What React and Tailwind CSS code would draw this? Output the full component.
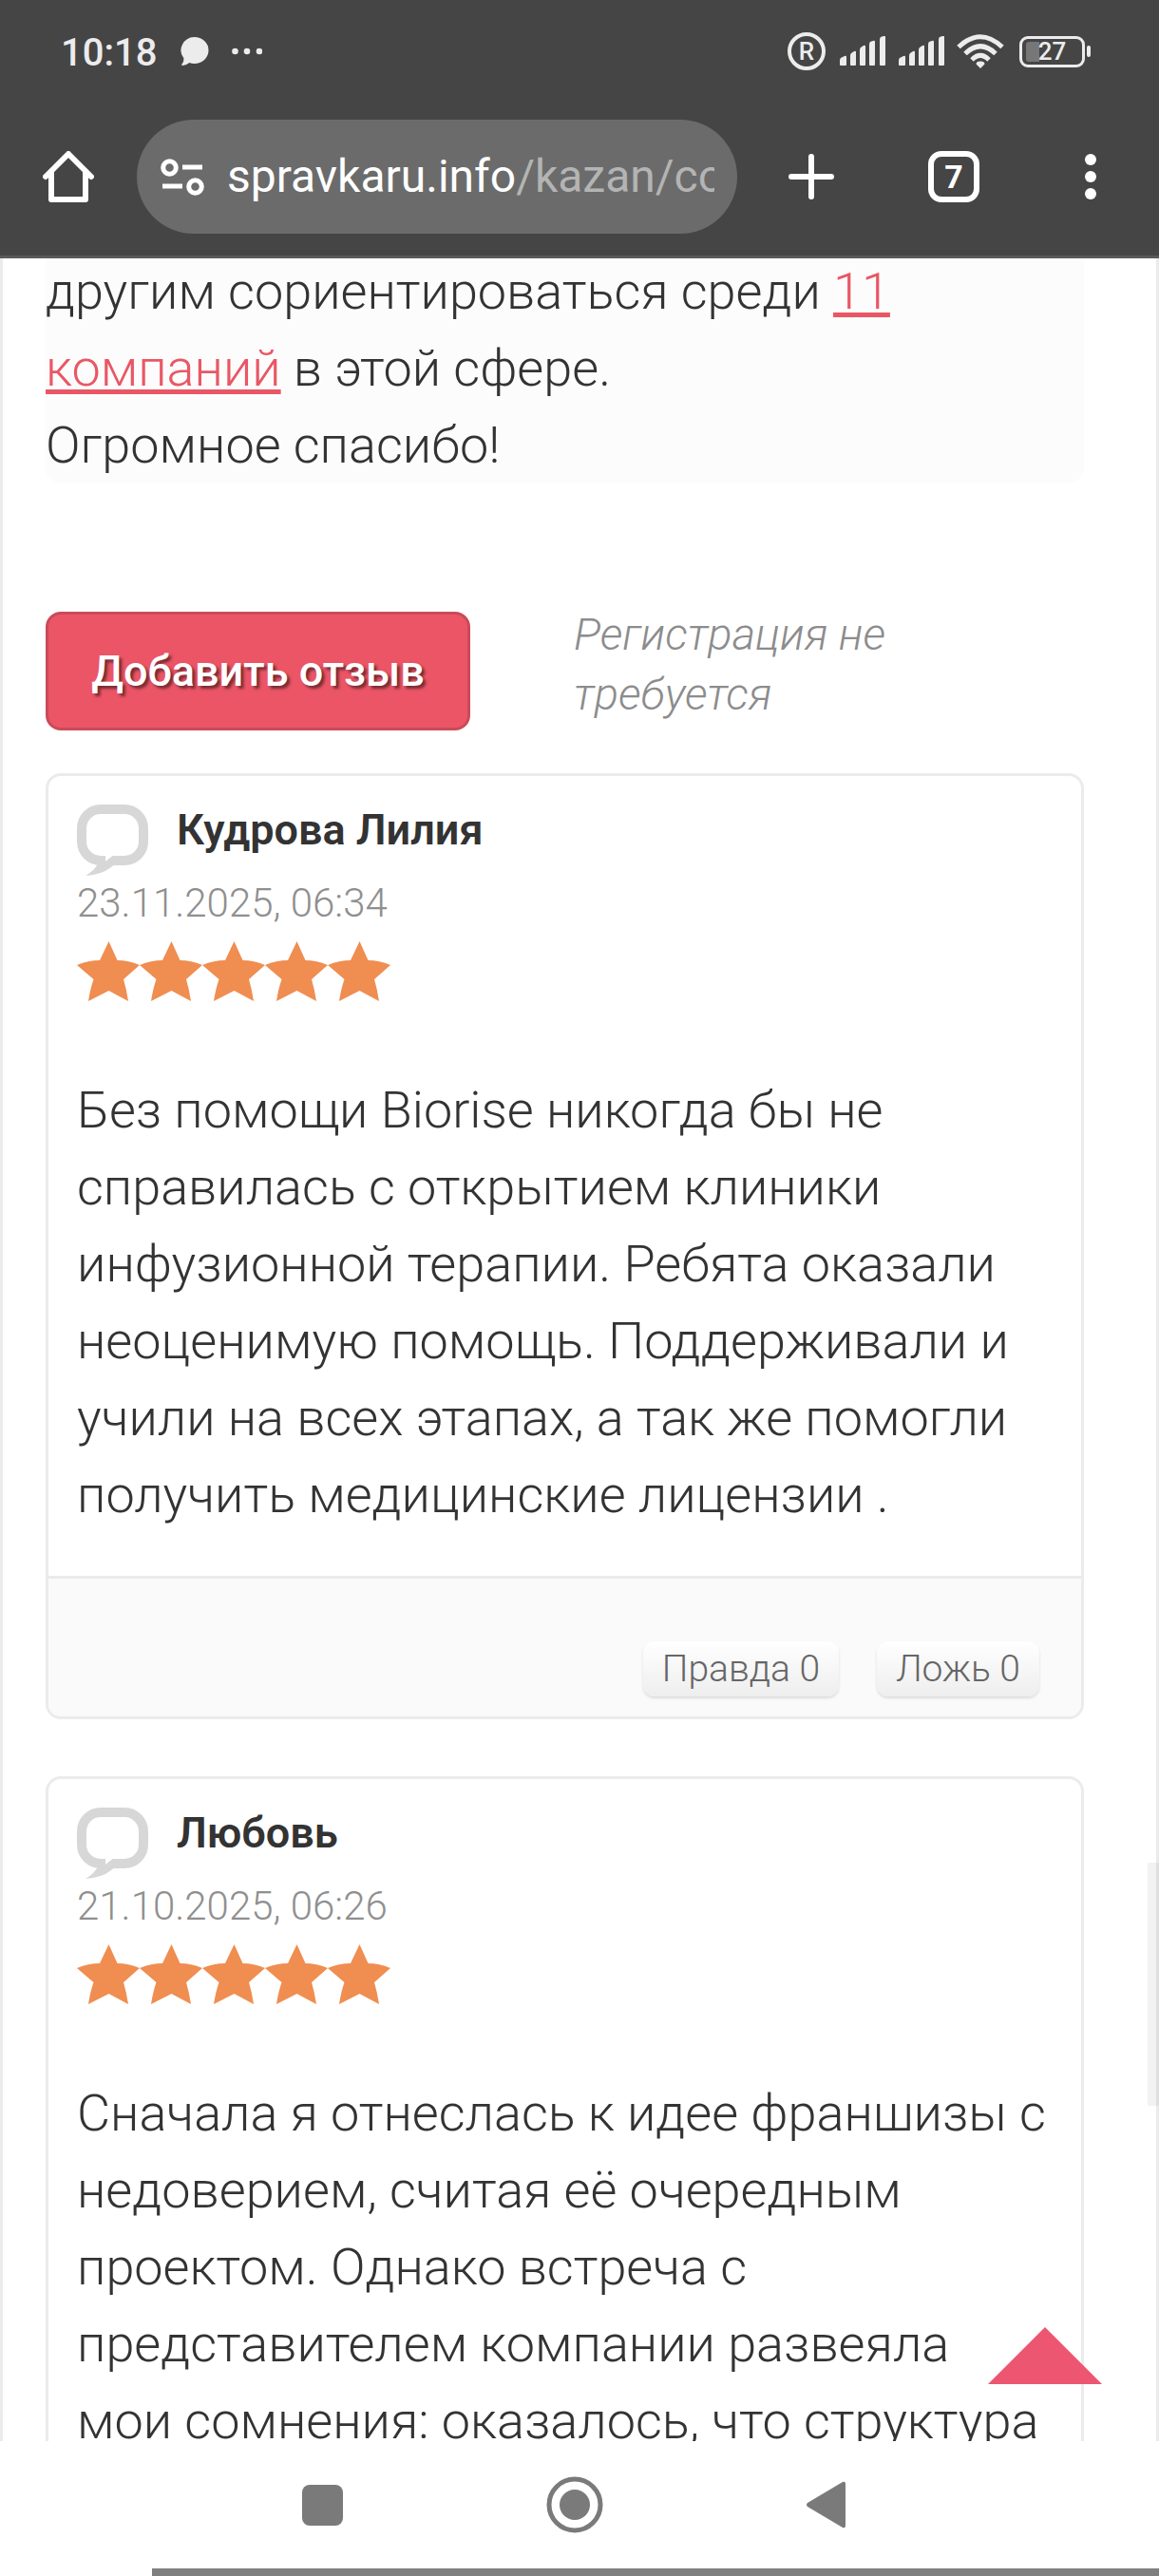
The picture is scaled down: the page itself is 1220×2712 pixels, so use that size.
import React from 'react';

const reviews = [
  {
    id: 1,
    author: 'Кудрова Лилия',
    date: '23.11.2025, 06:34',
    rating: 5,
    text: 'Без помощи Biorise никогда бы не справилась с открытием клиники инфузионной терапии. Ребята оказали неоценимую помощь. Поддерживали и учили на всех этапах, а так же помогли получить медицинские лицензии .',
    truth: 0,
    lie: 0
  },
  {
    id: 2,
    author: 'Любовь',
    date: '21.10.2025, 06:26',
    rating: 5,
    text: 'Сначала я отнеслась к идее франшизы с недоверием, считая её очередным проектом. Однако встреча с представителем компании развеяла мои сомнения: оказалось, что структура',
    truth: 0,
    lie: 0
  }
];

const SignalIcon = () => (
  <svg className="h-8 w-[50px]" viewBox="0 0 50 32" fill="#ececec" aria-hidden="true">
    <path d="M1 26q0-2 1-3l4-2q2-1 2 1v8a1 1 0 0 1-1 1H2a1 1 0 0 1-1-1z" />
    <path d="M12 21q0-2 1-3l3-2q2-1 2 1v13a1 1 0 0 1-1 1h-4a1 1 0 0 1-1-1z" />
    <path d="M22 15q0-2 1-3l3-2q2-1 2 1v19a1 1 0 0 1-1 1h-4a1 1 0 0 1-1-1z" />
    <path d="M32 9q0-2 1-3l3-1q2-1 2 1v24a1 1 0 0 1-1 1h-4a1 1 0 0 1-1-1z" />
    <path d="M43 4q0-2 1-3l3-1q2-1 2 1v29a1 1 0 0 1-1 1h-4a1 1 0 0 1-1-1z" />
  </svg>
);

const WifiIcon = () => (
  <svg className="h-9 w-[50px]" viewBox="0 0 50 36" fill="none" stroke="#ececec" strokeWidth="5" aria-hidden="true">
    <path d="M2 13.500Q25-8 48 13.500" />
    <path d="M9 20.500Q25 5 41 20.500" />
    <path d="M16 27Q25 18 34 27" />
    <path d="M25 36l-4.500-4.500q0-3 4.500-3t4.500 3z" fill="#ececec" stroke="none" />
  </svg>
);

const StatusBar = () => (
  <div className="flex h-[108px] items-center justify-between pl-16 pr-[72px] text-[#ececec]">
    <div className="flex items-center">
      <span className="pt-1 text-[40px] leading-none font-medium">10:18</span>
      <svg className="ml-6 h-[30px] w-[31px]" viewBox="0 0 31 30" fill="#ececec" aria-hidden="true">
        <path d="M15.500 0a15 14 0 0 1 0 28q-3 0-5-1-4 3-7 3-2 0-1-1.500 2-2 2-6A14.500 14 0 0 1 15.500 0z" />
      </svg>
      <svg className="ml-6 h-2 w-8" viewBox="0 0 32 8" fill="#ececec" aria-hidden="true">
        <circle cx="3.500" cy="4" r="3.300" />
        <circle cx="16" cy="4" r="3.300" />
        <circle cx="29" cy="4" r="3.300" />
      </svg>
    </div>

    <div className="flex items-center">
      <span className="flex h-10 w-10 items-center justify-center rounded-full border-4 border-[#ececec] text-[26px] leading-none font-medium">
        R
      </span>
      <span className="ml-3.5 flex gap-3">
        <SignalIcon />
        <SignalIcon />
      </span>
      <span className="ml-3">
        <WifiIcon />
      </span>
      <span className="relative ml-4 flex h-[33px] w-[69px] items-center justify-center rounded-[9px] border-3 border-[#ececec]">
        <span className="absolute left-1 h-[21px] w-3.5 rounded-l-[3px] bg-[#777777]" />
        <span className="relative text-[26px] leading-none font-medium">27</span>
      </span>
      <span className="ml-0.5 h-3 w-1 rounded-full bg-[#ececec]" />
    </div>
  </div>
);

const Toolbar = () => (
  <nav className="flex items-center pt-[18px] pr-[66px] pb-[23px] pl-[45px] text-white">
    <button type="button" aria-label="Главная страница" className="shrink-0">
      <svg className="h-[54px] w-[54px]" viewBox="0 0 54 54" fill="none" stroke="currentColor" strokeWidth="6" strokeLinecap="round" strokeLinejoin="round" aria-hidden="true">
        <path d="M3 27L27 3l24 24" />
        <path d="M9 22v29h36V22" />
      </svg>
    </button>

    {/* Address bar */}
    <button
      type="button"
      className="ml-[45px] flex h-[120px] min-w-0 flex-1 items-center rounded-full bg-[#6b6b6b] pr-6 pl-[25px] text-left"
    >
      <svg className="h-[39px] w-[46px] shrink-0" viewBox="0 0 46 39" fill="none" stroke="currentColor" strokeWidth="5" aria-hidden="true">
        <circle cx="9.500" cy="9.500" r="6.800" />
        <path d="M23 9h21" />
        <circle cx="36.500" cy="29.500" r="6.800" />
        <path d="M2 29h21" />
      </svg>
      <span className="ml-6 min-w-0 flex-1 overflow-hidden text-[48px] leading-[60px] whitespace-nowrap">
        spravkaru.info<span className="text-[#b4b4b4]">/kazan/co</span>
      </span>
    </button>

    <button type="button" aria-label="Новая вкладка" className="ml-[54px] shrink-0">
      <svg className="h-12 w-12" viewBox="0 0 48 48" fill="none" stroke="currentColor" strokeWidth="6" strokeLinecap="round" aria-hidden="true">
        <path d="M24 3v42M3 24h42" />
      </svg>
    </button>
    <button
      type="button"
      aria-label="Вкладки: 7"
      className="ml-[99px] flex h-[54px] w-[54px] shrink-0 items-center justify-center rounded-[14px] border-6 border-white text-[34px] leading-none font-bold"
    >
      7
    </button>
    <button type="button" aria-label="Меню" className="ml-[111px] shrink-0">
      <svg className="h-12 w-3" viewBox="0 0 12 48" fill="currentColor" aria-hidden="true">
        <circle cx="6" cy="6" r="6" />
        <circle cx="6" cy="24" r="6" />
        <circle cx="6" cy="42" r="6" />
      </svg>
    </button>
  </nav>
);

const Stars = ({ rating }) => (
  <div className="mt-[15px] flex" role="img" aria-label={`Оценка ${rating} из 5`}>
    {Array.from({ length: rating }, (_, i) => (
      <svg key={i} className="h-[63px] w-[66px]" viewBox="0 0 66 63" fill="#f08d50" aria-hidden="true">
        <path d="M33.500 0L42.500 20Q54 20 66 25L49 40Q52 50 54 63L33.500 52L12 63Q14 50 17.500 40L0 25Q12 20 24 20Z" />
      </svg>
    ))}
  </div>
);

const VoteButton = ({ label, count }) => (
  <button
    type="button"
    className="h-[58px] rounded-xl bg-linear-to-b from-white to-[#eeeeee] px-5 text-[39px] leading-none font-light text-[#666666] shadow-[0_2px_3px_rgba(0,0,0,0.12)]"
  >
    {label} {count}
  </button>
);

/**
 * Single review: author, date, rating, text and the vote row.
 */
const ReviewCard = ({ review }) => (
  <article className="overflow-hidden rounded-2xl border-3 border-[#ebebeb]">
    <div className="px-[30px] pt-[30px] pb-[45px]">
      <div className="flex gap-[30px]">
        <svg className="h-[75px] w-[75px] shrink-0" viewBox="0 0 75 75" fill="none" aria-hidden="true">
          <rect x="5" y="5" width="65" height="54" rx="20" stroke="#d7d7d7" strokeWidth="10" />
          <path d="M20 58H46L36 66Q26 74 9 75Q19 69 22 62Z" fill="#d7d7d7" />
          <path d="M30 52V60L40 52Z" fill="#ffffff" />
        </svg>
        <h3 className="text-[45px] leading-[54px] font-semibold text-[#333333]">{review.author}</h3>
      </div>
      <time className="mt-1 block text-[42px] leading-[50px] font-light text-[#8f8f8f]">{review.date}</time>
      <Stars rating={review.rating} />
      <p className="mt-[74px] text-[54px] leading-[81px] font-light text-[#333333]">{review.text}</p>
    </div>
    <div className="flex justify-end gap-10 border-t-3 border-[#ebebeb] bg-[#fafafa] pt-[66px] pr-11 pb-[21px]">
      <VoteButton label="Правда" count={review.truth} />
      <VoteButton label="Ложь" count={review.lie} />
    </div>
  </article>
);

const SystemNav = () => (
  <footer className="flex h-[142px] shrink-0 flex-col justify-between bg-white">
    <div className="flex h-[134px] items-center justify-center gap-[214px] pr-3 text-[#7a7a7a]">
      <button type="button" aria-label="Недавние" className="h-[43px] w-[43px] rounded-lg bg-[#7a7a7a]" />
      <button type="button" aria-label="Домой">
        <svg className="h-[60px] w-[60px]" viewBox="0 0 60 60" fill="none" aria-hidden="true">
          <circle cx="30" cy="30" r="27" stroke="currentColor" strokeWidth="5" />
          <circle cx="30" cy="30" r="16" fill="currentColor" />
        </svg>
      </button>
      <button type="button" aria-label="Назад">
        <svg className="h-[50px] w-[41px]" viewBox="0 0 41 50" fill="currentColor" aria-hidden="true">
          <path d="M1 23L38 1Q41 0 41 3V47Q41 50 38 49L1 27Q-1 25 1 23Z" />
        </svg>
      </button>
    </div>
    <div className="ml-40 h-2 bg-[#808080]" />
  </footer>
);

const App = () => {
  return (
    <div className="flex h-screen flex-col overflow-hidden bg-white font-['Roboto',sans-serif]">
      <header className="shrink-0 border-b-3 border-[#5a5a5a] bg-[#454545]">
        <StatusBar />
        <Toolbar />
      </header>

      <div className="relative min-h-0 flex-1">
        <main className="h-full overflow-hidden border-x-3 border-[#ebebeb] pr-[76px] pl-[45px]">
          <p className="-mt-1.5 rounded-b-2xl bg-[#fcfcfc] text-[54px] leading-[81px] font-light text-[#333333]">
            другим сориентироваться среди{' '}
            <a href="#companies" className="text-[#e95765] underline decoration-[5px] underline-offset-4">
              11 компаний
            </a>{' '}
            в этой сфере.
            <br />
            Огромное спасибо!
          </p>

          <div className="mt-[135px] flex items-start">
            <button
              type="button"
              className="h-[125px] w-[447px] shrink-0 rounded-2xl border-3 border-[#cb4a58] bg-[#eb5565] text-[45px] font-medium text-white text-shadow-[3px_3px_3px_rgba(0,0,0,0.5)]"
            >
              Добавить отзыв
            </button>
            <p className="-mt-2 ml-[109px] w-[360px] text-[47px] leading-[63px] font-light text-[#8c8c8c] italic">
              Регистрация не требуется
            </p>
          </div>

          <div className="mt-[45px] flex flex-col gap-[60px]">
            {reviews.map((review) => (
              <ReviewCard key={review.id} review={review} />
            ))}
          </div>
        </main>

        {/* Scroll position */}
        <div className="absolute top-[1689px] right-0 h-64 w-3 bg-black/5" />

        {/* Back to top */}
        <a href="#top" aria-label="Наверх" className="absolute right-[60px] bottom-[60px]">
          <svg className="h-[60px] w-[120px]" viewBox="0 0 120 60" fill="#ec5671" aria-hidden="true">
            <path d="M60 0L120 60H0Z" />
          </svg>
        </a>
      </div>

      <SystemNav />
    </div>
  );
};

export default App;
